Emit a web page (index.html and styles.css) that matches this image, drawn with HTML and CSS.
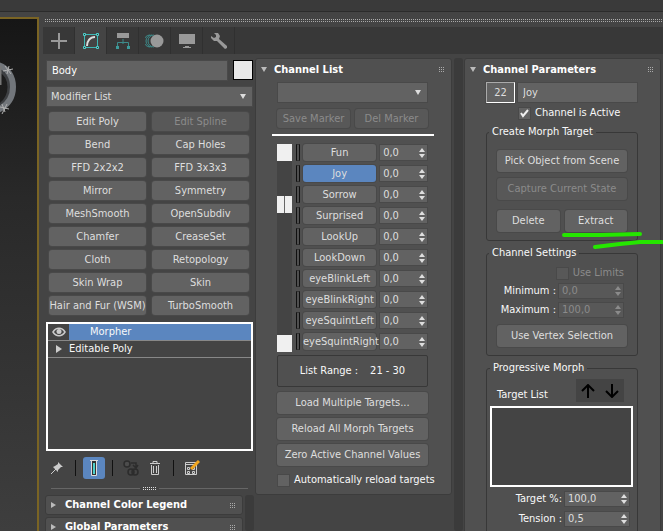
FILE: index.html
```html
<!DOCTYPE html>
<html lang="en">
<head>
<meta charset="UTF-8">
<meta name="viewport" content="width=device-width, initial-scale=1.0">
<title>Modifier Panel</title>
<link rel="stylesheet" href="styles.css">
</head>
<body>
  <header class="top-bar"></header>

  <div class="workspace">
    <div class="viewport">
      <svg class="gizmo" width="20" height="60" viewBox="0 0 20 60">
        <path d="M0 13C6 16 9 22 9 29C9 37 5 43 0 47" fill="none" stroke="#3d3f42" stroke-width="3"/>
        <path d="M-2 7C8 10 13 19 13 29C13 40 8 47 -2 52" fill="none" stroke="#72767b" stroke-width="6"/>
        <path d="M0 8V27" stroke="#777" stroke-width="3"/>
        <path d="M3 13L13 11M5 8L11 16M9 8L7 16M0 49L9 51M2 46L5 54M7 46L2 56" stroke="#b0b0b0" stroke-width="1"/>
      </svg>
    </div>

    <main class="command-panel">
      <div class="grip-strip"></div>
      <nav class="tabs">
        <button class="tab" aria-label="Create">
          <svg width="18" height="18" viewBox="0 0 18 18"><path d="M9 1V17M1 9H17" stroke="#999" stroke-width="2"/></svg>
        </button>
        <button class="tab active" aria-label="Modify">
          <svg width="18" height="18" viewBox="0 0 18 18">
            <path d="M2.500 2.500H15.500V15.500H2.500Z" fill="none" stroke="#3fb8b5"/>
            <path d="M5 14C5 9 8 5 13 5" fill="none" stroke="#ddd" stroke-width="2"/>
            <path d="M1.500 1.500h2v2h-2zM14.500 1.500h2v2h-2zM1.500 14.500h2v2h-2zM14.500 14.500h2v2h-2z" fill="#333" stroke="#4fd0cc"/>
          </svg>
        </button>
        <button class="tab" aria-label="Hierarchy">
          <svg width="18" height="18" viewBox="0 0 18 18">
            <path d="M3 1H15V6H3Z" fill="#999"/>
            <path d="M9 7V12M3.500 14V10.500H14.500V14" fill="none" stroke="#3d8b8b"/>
            <path d="M2 14h3v3H2zM13 14h3v3h-3z" fill="#3d9b9b"/>
          </svg>
        </button>
        <button class="tab" aria-label="Motion">
          <svg width="20" height="18" viewBox="0 0 20 18">
            <path d="M7 3A6 6 0 0 0 7 15M5 3A6 6 0 0 0 5 15M9 3A6 6 0 0 0 9 15" fill="none" stroke="#3d8b8b"/>
            <circle cx="12" cy="9" r="6.500" fill="#999"/>
          </svg>
        </button>
        <button class="tab" aria-label="Display">
          <svg width="18" height="18" viewBox="0 0 18 18"><path d="M1 2H17V12H1Z" fill="#999"/><path d="M7 14H11V15H13V16H5V15H7Z" fill="#999"/></svg>
        </button>
        <button class="tab" aria-label="Utilities">
          <svg width="18" height="18" viewBox="0 0 18 18">
            <path d="M4 1L8 1L10 4L9 7L17 14L17 16L15 17L7 9L4 9L1 6L1 4L4 6L6 5L6 3Z" fill="#999"/>
          </svg>
        </button>
      </nav>

      <div class="columns">
        <section class="modifier-column">
          <div class="modifiers">
            <div class="name-row">
              <input class="field object-name" type="text" value="Body" aria-label="Object name">
              <button class="swatch" aria-label="Object color"></button>
            </div>
            <select class="field dropdown" aria-label="Modifier List"><option>Modifier List</option></select>
            <div class="modifier-grid">
              <button class="btn">Edit Poly</button>
              <button class="btn" disabled>Edit Spline</button>
              <button class="btn">Bend</button>
              <button class="btn">Cap Holes</button>
              <button class="btn">FFD 2x2x2</button>
              <button class="btn">FFD 3x3x3</button>
              <button class="btn">Mirror</button>
              <button class="btn">Symmetry</button>
              <button class="btn">MeshSmooth</button>
              <button class="btn">OpenSubdiv</button>
              <button class="btn">Chamfer</button>
              <button class="btn">CreaseSet</button>
              <button class="btn">Cloth</button>
              <button class="btn">Retopology</button>
              <button class="btn">Skin Wrap</button>
              <button class="btn">Skin</button>
              <button class="btn">Hair and Fur (WSM)</button>
              <button class="btn">TurboSmooth</button>
            </div>
            <ul class="stack">
              <li class="selected">
                <span class="eye">
                  <svg width="14" height="10" viewBox="0 0 14 10"><path d="M1 5C4 0 10 0 13 5C10 10 4 10 1 5Z" fill="none" stroke="#ccc" stroke-width="1.500"/><circle cx="7" cy="4.500" r="2.500" fill="#ccc"/></svg>
                </span>
                <span class="stack-name sub">Morpher</span>
              </li>
              <li>
                <span class="eye"><svg width="8" height="8" viewBox="0 0 8 8"><path d="M1 0L7 4L1 8Z" fill="#ccc"/></svg></span>
                <span class="stack-name">Editable Poly</span>
              </li>
            </ul>
            <div class="stack-tools">
              <button class="tool" aria-label="Pin stack">
                <svg width="14" height="14" viewBox="0 0 14 14"><path d="M1 13L6 8" stroke="#ccc"/><path d="M3 6L5 5L8 3L8 1L13 6L11 6L8 9L8 11Z" fill="#ccc"/></svg>
              </button>
              <span class="bar"></span>
              <button class="tool on" aria-label="Show end result">
                <svg width="10" height="18" viewBox="0 0 10 18"><path d="M1 1.500H9M2.500 2V16.500H7.500V2" fill="#333" stroke="#ddd"/><path d="M4 4H6V15H4Z" fill="#4fd0cc"/></svg>
              </button>
              <span class="bar"></span>
              <button class="tool" aria-label="Make unique">
                <svg width="18" height="18" viewBox="0 0 18 18" fill="none" stroke="#2c2c2c" stroke-width="1.500"><circle cx="5" cy="5" r="3" fill="#4c4c4c"/><circle cx="9" cy="13" r="3"/><circle cx="13" cy="13" r="3"/><path d="M9 4H14V8M11 6L14 9L16 6"/></svg>
              </button>
              <button class="tool" aria-label="Remove modifier">
                <svg width="12" height="16" viewBox="0 0 12 16" fill="none" stroke="#ccc"><path d="M1 3.500H11M4 3V1.500H8V3M2.500 5V14.500H9.500V5M4.500 6V13M7.500 6V13"/></svg>
              </button>
              <span class="bar"></span>
              <button class="tool" aria-label="Configure modifier sets">
                <svg width="16" height="16" viewBox="0 0 16 16"><path d="M1.500 2.500H12.500V14.500H1.500ZM1 4.500H12M3.500 7.500h2v2h-2zM8.500 7.500h2v2h-2zM3.500 11.500h2v2h-2zM8.500 11.500h2v2h-2z" fill="none" stroke="#ccc"/><path d="M7 9L15 1" stroke="#f0a51e" stroke-width="3"/></svg>
              </button>
            </div>
            <div class="splitter"><span class="splitter-grip"></span></div>
          </div>
          <div class="rollout-area">
            <div class="rollout-list">
              <div class="rollout"><h2 class="rollout-title closed">Channel Color Legend</h2></div>
              <div class="rollout"><h2 class="rollout-title closed">Global Parameters</h2></div>
            </div>
            <div class="scroll-track"></div>
          </div>
        </section>

        <section class="list-column">
          <div class="rollout">
            <h2 class="rollout-title">Channel List</h2>
            <div class="list-body">
              <select class="field dropdown" aria-label="Marker"><option></option></select>
              <div class="marker-row">
                <button class="btn" disabled>Save Marker</button>
                <button class="btn" disabled>Del Marker</button>
              </div>
              <hr class="rule">
              <div class="channels">
                <div class="channel-track"><span class="thumb"></span><span class="thumb split"></span><span class="thumb"></span></div>
                <ul class="channel-rows" id="channelRows"></ul>
              </div>
              <div class="range-box"><span>List Range :</span><span>21 - 30</span></div>
              <div class="load-buttons">
                <button class="btn tall">Load Multiple Targets...</button>
                <button class="btn tall">Reload All Morph Targets</button>
                <button class="btn tall">Zero Active Channel Values</button>
              </div>
              <label class="check"><input type="checkbox">Automatically reload targets</label>
            </div>
          </div>
        </section>

        <div class="scroll-track"></div>

        <section class="param-column">
          <div class="rollout">
            <h2 class="rollout-title">Channel Parameters</h2>
            <div class="param-body">
              <div class="channel-id">
                <button class="btn channel-number">22</button>
                <input class="field" type="text" value="Joy" aria-label="Channel name">
              </div>
              <label class="check active-check"><input type="checkbox" checked>Channel is Active</label>

              <fieldset class="group create-group">
                <legend>Create Morph Target</legend>
                <button class="btn tall">Pick Object from Scene</button>
                <button class="btn tall" disabled>Capture Current State</button>
                <div class="pair">
                  <button class="btn tall">Delete</button>
                  <button class="btn tall">Extract</button>
                </div>
                <svg class="marks" width="104" height="20" viewBox="0 0 104 20" fill="none" stroke="#25e600" stroke-width="4" stroke-linecap="round" stroke-linejoin="round">
                  <path d="M4 5L40 5L80 4"/><path d="M35 17L60 14L80 12L102 12"/>
                </svg>
              </fieldset>

              <fieldset class="group settings-group">
                <legend>Channel Settings</legend>
                <label class="check limits disabled"><input type="checkbox" disabled>Use Limits</label>
                <div class="value-row"><label for="minimum">Minimum :</label><span class="spinner"><input id="minimum" type="text" value="0,0" disabled></span></div>
                <div class="value-row"><label for="maximum">Maximum :</label><span class="spinner"><input id="maximum" type="text" value="100,0" disabled></span></div>
                <button class="btn tall">Use Vertex Selection</button>
              </fieldset>

              <fieldset class="group morph-group">
                <legend>Progressive Morph</legend>
                <div class="target-head">
                  <span>Target List</span>
                  <span class="arrows">
                    <button aria-label="Move up"><svg width="14" height="14" viewBox="0 0 14 14"><path d="M7 14V2M1 7L7 1L13 7" fill="none" stroke="#000" stroke-width="2"/></svg></button>
                    <button aria-label="Move down"><svg width="14" height="14" viewBox="0 0 14 14"><path d="M7 0V12M1 7L7 13L13 7" fill="none" stroke="#000" stroke-width="2"/></svg></button>
                  </span>
                </div>
                <div class="target-list"></div>
                <div class="value-row"><label for="target">Target %:</label><span class="spinner"><input id="target" type="text" value="100,0"></span></div>
                <div class="value-row"><label for="tension">Tension :</label><span class="spinner"><input id="tension" type="text" value="0,5"></span></div>
              </fieldset>
            </div>
          </div>
        </section>
      </div>
    </main>
  </div>

<script>
  var channels = ["Fun", "Joy", "Sorrow", "Surprised", "LookUp", "LookDown", "eyeBlinkLeft", "eyeBlinkRight", "eyeSquintLeft", "eyeSquintRight"];
  var channelRows = document.getElementById("channelRows");
  channels.forEach(function(name) {
    var selected = name === "Joy" ? " selected" : "";
    channelRows.innerHTML += '<li><span class="channel-flag"></span><button class="btn' + selected + '">' + name +
      '</button><span class="spinner"><input type="text" value="0,0" aria-label="' + name + '"></span></li>';
  });

  // Add the up/down arrows to every spinner
  document.querySelectorAll(".spinner").forEach(function(spinner) {
    spinner.insertAdjacentHTML("beforeend", '<svg width="6" height="10" viewBox="0 0 6 10"><path d="M3 0L6 4H0ZM0 6H6L3 10Z" fill="currentColor"/></svg>');
  });
</script>
</body>
</html>
```
FILE: styles.css
```css
* {
  box-sizing: border-box;
}
body {
  margin: 0;
  height: 100vh;
  overflow: hidden;
  display: flex;
  flex-direction: column;
  font-family: "DejaVu Sans Condensed", "DejaVu Sans", sans-serif;
  font-size: 11px;
  line-height: 14px;
  background-color: #444;
  color: #f8f8f8;
}
button, input, select {
  font: inherit;
  color: inherit;
  margin: 0;
  padding: 0;
  border: 0;
  background: none;
  min-width: 0;
}
ul {
  list-style: none;
  margin: 0;
  padding: 0;
}
svg {
  display: block;
  flex: none;
}
.top-bar {
  flex: none;
  height: 12px;
  background-color: #3a3a3a;
  border-bottom: 1px solid #2b2b2b;
}
.workspace {
  flex: 1;
  min-height: 0;
  display: flex;
}
.viewport {
  flex: none;
  width: 39px;
  margin-top: 5px;
  padding-top: 39px;
  border-top: 2px solid #7a6424;
  border-right: 2px solid #7a6424;
  background: linear-gradient(#161616, #292929 35%, #3e3e3e);
}
.command-panel {
  flex: 1;
  min-width: 0;
  display: flex;
  flex-direction: column;
  padding: 7px 2px 0 4px;
}
.grip-strip {
  height: 3px;
  margin: 0 -2px 5px 2px;
  background: repeating-linear-gradient(90deg, #aaa 0 1px, transparent 1px 2px) 0 0 / 100% 1px no-repeat,
    repeating-linear-gradient(90deg, #aaa 0 1px, transparent 1px 2px) 0 2px / 100% 1px no-repeat;
}

/* tabs */
.tabs {
  height: 27px;
  flex: none;
  display: flex;
  margin-right: -2px;
  background-color: #383838;
}
.tab {
  width: 32px;
  display: flex;
  align-items: center;
  justify-content: center;
  border-right: 1px solid #303030;
}
.tab.active {
  background-color: #444;
}

.columns {
  flex: 1;
  min-height: 0;
  display: flex;
  margin-top: 4px;
}
.modifier-column {
  flex: 212;
  min-width: 0;
  display: flex;
  flex-direction: column;
}
.list-column, .param-column {
  flex: 197;
  min-width: 0;
}
.scroll-track {
  flex: none;
  width: 9px;
  margin: 0 1px 0 2px;
  background-color: #3b3b3b;
  border-radius: 3px;
}

/* shared controls */
.btn {
  height: 19px;
  line-height: 19px;
  border-radius: 3px;
  background-color: #626262;
  color: #dedede;
  box-shadow: 0 0 0 1px #494949;
  text-align: center;
  white-space: nowrap;
}
.btn:disabled {
  background-color: #585858;
  color: #8b8b8b;
}
.btn.tall {
  height: 22px;
  line-height: 22px;
}
.btn.selected {
  background-color: #5b86bf;
}
.field {
  width: 100%;
  height: 21px;
  padding: 0 5px;
  border: 1px solid #494949;
  background-color: #626262;
  color: #dedede;
}
.object-name {
  color: #fff;
}
.dropdown {
  padding: 0 4px;
  appearance: none;
  background: #626262 url("data:image/svg+xml,%3Csvg xmlns='http://www.w3.org/2000/svg' width='6' height='5'%3E%3Cpath d='M0 0H6L3 5Z' fill='%23ddd'/%3E%3C/svg%3E") right 6px center no-repeat;
}
.spinner {
  height: 17px;
  display: flex;
  align-items: center;
  padding: 0 2px 0 3px;
  border: 1px solid #494949;
  background-color: #626262;
  color: #dedede;
}
.spinner input {
  flex: 1;
  width: 0;
  height: 14px;
}
.spinner:has(:disabled) {
  background-color: #585858;
  color: #8b8b8b;
}
.check {
  display: flex;
  align-items: center;
  gap: 4px;
  white-space: nowrap;
}
.check input {
  appearance: none;
  flex: none;
  width: 13px;
  height: 13px;
  border: 1px solid #494949;
  background-color: #626262;
}
.check input:checked {
  background-image: url("data:image/svg+xml,%3Csvg xmlns='http://www.w3.org/2000/svg' width='11' height='11'%3E%3Cpath d='M2 5L4 8L9 2' fill='none' stroke='%23eee' stroke-width='2'/%3E%3C/svg%3E");
}
.check.disabled {
  color: #8b8b8b;
}
.check.disabled input {
  background-color: #585858;
}

/* rollouts */
.rollout {
  border: 1px solid #3c3c3c;
  border-radius: 3px;
  background-color: #505050;
}
.rollout-title {
  display: flex;
  align-items: center;
  gap: 7px;
  height: 21px;
  margin: 0;
  padding: 0 7px 0 5px;
  font-size: 11px;
  line-height: 14px;
  color: #fff;
  white-space: nowrap;
}
.rollout-title::before {
  content: "";
  border: 3px solid transparent;
  border-top: 5px solid #bbb;
  border-bottom: 0;
}
.rollout-title.closed {
  height: 18px;
}
.rollout-title.closed::before {
  border: 3px solid transparent;
  border-left: 5px solid #bbb;
  border-right: 0;
  margin-right: 2px;
}
.rollout-title::after {
  content: "";
  width: 5px;
  height: 5px;
  margin-left: auto;
  background: conic-gradient(transparent 75%, #aaa 0) 0 0 / 2px 2px;
}

/* left column */
.modifiers {
  padding: 2px 2px 0 3px;
}
.name-row {
  display: flex;
  justify-content: space-between;
  gap: 5px;
  margin-bottom: 5px;
}
.swatch {
  flex: none;
  width: 20px;
  height: 20px;
  border: 1px solid #000;
  background-color: #e8e8e8;
}
.modifier-grid {
  display: grid;
  grid-template-columns: 1fr 1fr;
  gap: 4px 6px;
  padding: 5px 4px 7px 3px;
}
.stack {
  height: 129px;
  border: 2px solid #fff;
  background-color: #444;
}
.stack li {
  display: flex;
  height: 17px;
  line-height: 16px;
  border-bottom: 1px solid #888;
}
.eye {
  width: 21px;
  display: flex;
  align-items: center;
  justify-content: center;
}
.stack-name {
  flex: 1;
}
.sub {
  padding-left: 21px;
}
.selected .stack-name {
  background-color: #5b86bf;
}
.stack-tools {
  display: flex;
  align-items: center;
  gap: 2px;
  height: 33px;
}
.tool {
  width: 22px;
  height: 22px;
  display: flex;
  align-items: center;
  justify-content: center;
  border-radius: 3px;
}
.tool.on {
  background-color: #5b86bf;
}
.bar {
  width: 1px;
  height: 16px;
  margin: 0 5px;
  background-color: #111;
}
.splitter {
  display: flex;
  align-items: center;
  gap: 3px;
  height: 8px;
  padding: 0 5px;
}
.splitter::before, .splitter::after {
  content: "";
  flex: 1;
  height: 1px;
  background-color: #666;
}
.splitter-grip {
  width: 13px;
  height: 3px;
  background: conic-gradient(transparent 75%, #ddd 0) 0 0 / 2px 2px;
}
.rollout-area {
  flex: 1;
  min-height: 0;
  display: flex;
  padding: 3px 0 0 2px;
}
.rollout-list {
  flex: 1;
  display: flex;
  flex-direction: column;
  gap: 2px;
}

/* channel list */
.list-body {
  padding: 2px 23px 7px 21px;
}
.marker-row {
  display: grid;
  grid-template-columns: 1fr 1fr;
  gap: 5px;
  margin: 6px 0;
}
.rule {
  height: 2px;
  margin: 0 -6px 8px -5px;
  border: 0;
  background-color: #fff;
}
.channels {
  display: flex;
  gap: 4px;
}
.channel-track {
  width: 15px;
  height: 208px;
  display: flex;
  flex-direction: column;
  background-color: #444;
}
.thumb {
  height: 17px;
  background-color: #f0f0f0;
}
.thumb.split {
  margin: 35px 0 auto;
  background: linear-gradient(90deg, #f0f0f0 7px, #666 7px 8px, #f0f0f0 8px);
}
.channel-rows {
  flex: 1;
  min-width: 0;
  display: grid;
  gap: 4px;
  align-content: start;
}
.channel-rows li {
  display: grid;
  grid-template-columns: 4px 3fr 2fr;
  gap: 3px;
}
.channel-rows .btn {
  height: 17px;
  line-height: 17px;
}
.channel-flag {
  border: 1px solid #111;
  border-color: #333 #111 #333 #111;
}
.range-box {
  display: flex;
  justify-content: center;
  gap: 12px;
  margin: 3px 0 5px;
  padding: 8px 0;
  border: 1px solid #383838;
  border-radius: 2px;
}
.load-buttons {
  display: grid;
  gap: 4px;
  margin-bottom: 7px;
}

/* channel parameters */
.param-body {
  padding: 2px 22px 0 21px;
}
.channel-id {
  display: flex;
  gap: 2px;
}
.channel-number {
  flex: none;
  width: 29px;
  height: 21px;
  border: 1px solid;
  border-color: #aaa #fff #fff #aaa;
  border-radius: 0;
}
.active-check {
  margin: 3px 0 5px 32px;
}
.group {
  position: relative;
  display: grid;
  gap: 6px;
  min-width: 0;
  margin: 0 0 5px;
  padding: 11px 10px 8px;
  border: 1px solid #383838;
  border-radius: 3px;
}
.group legend {
  padding: 0 3px;
}
.create-group legend, .settings-group legend {
  margin-left: -8px;
}
.pair {
  display: grid;
  grid-template-columns: 1fr 1fr;
  gap: 5px;
  padding-top: 4px;
}
.marks {
  position: absolute;
  right: -27px;
  bottom: -10px;
  z-index: 1;
}
.settings-group {
  gap: 3px;
  padding-top: 6px;
}
.limits {
  justify-self: end;
  margin-right: 3px;
}
.value-row {
  display: flex;
  justify-content: flex-end;
  align-items: center;
  gap: 2px;
  margin-right: 3px;
  white-space: nowrap;
}
.value-row .spinner {
  width: 66px;
  height: 16px;
}
.settings-group .btn {
  margin-top: 4px;
}
.morph-group {
  gap: 4px;
  padding: 4px 4px 8px 3px;
}
.target-head {
  display: flex;
  justify-content: space-between;
  align-items: flex-end;
  padding: 0 9px 0 7px;
}
.arrows {
  display: flex;
  background-color: #444;
}
.arrows button {
  width: 24px;
  height: 23px;
  display: flex;
  align-items: center;
  justify-content: center;
}
.target-list {
  height: 81px;
  border: 2px solid #fff;
  background-color: #444;
}
```
